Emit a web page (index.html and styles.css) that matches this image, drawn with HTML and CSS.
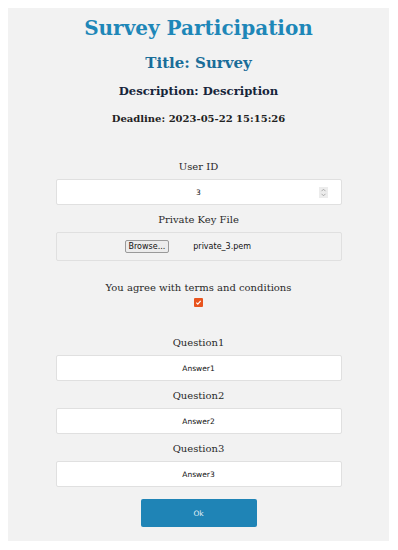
FILE: index.html
```html
<!DOCTYPE html>
<html lang="en">

<head>
    <title>Survey Participation</title>
    <link rel="stylesheet" href="styles.css">
</head>

<body>
    <div class="survey">
        <h1 class="survey-title">Survey Participation</h1>
        <h2 class="survey-name">Title: Survey</h2>
        <h3 class="survey-desc">Description: Description</h3>
        <h4 class="survey-deadline">Deadline: 2023-05-22 15:15:26</h4>

        <form class="survey-form">
            <label class="field-label" for="uid">User ID</label>
            <div class="field number-field">
                <span class="field-value">3</span>
                <span class="spin">
                    <svg width="7" height="9" viewBox="0 0 7 9">
                        <path d="M1.5 3.2 L3.5 1.2 L5.5 3.2 M1.5 5.8 L3.5 7.8 L5.5 5.8" fill="none" stroke="#9a9a9a" stroke-width="0.8"/>
                    </svg>
                </span>
            </div>

            <label class="field-label">Private Key File</label>
            <div class="field file-field">
                <span class="browse">Browse...</span>
                <span class="file-name">private_3.pem</span>
            </div>

            <div class="terms">
                <span class="terms-text">You agree with terms and conditions</span>
                <span class="check">
                    <svg width="7" height="7" viewBox="0 0 7 7">
                        <path d="M1.3 3.6 L2.8 5.1 L5.7 1.8" fill="none" stroke="#fff" stroke-width="1.2"/>
                    </svg>
                </span>
            </div>

            <label class="field-label">Question1</label>
            <div class="field"><span class="field-value">Answer1</span></div>
            <label class="field-label">Question2</label>
            <div class="field"><span class="field-value">Answer2</span></div>
            <label class="field-label">Question3</label>
            <div class="field"><span class="field-value">Answer3</span></div>

            <button type="button" class="ok">Ok</button>
        </form>
    </div>
</body>

</html>
```
FILE: styles.css
```css
body {
    margin: 8px;
    background-color: #ffffff;
    font-family: "DejaVu Serif", serif;
}

.survey {
    background-color: #f2f2f2;
    height: 533px;
    width: 381px;
    box-sizing: border-box;
    padding-top: 7px;
    text-align: center;
}

h1.survey-title {
    margin: 0;
    font-size: 20px;
    line-height: 26px;
    color: #1e87b8;
}

h2.survey-name {
    margin: 12px 0 0 0;
    font-size: 15px;
    line-height: 20px;
    color: #1a6d99;
}

h3.survey-desc {
    margin: 9px 0 0 0;
    font-size: 11.6px;
    line-height: 18px;
    color: #16253a;
}

h4.survey-deadline {
    margin: 11px 0 0 0;
    font-size: 10px;
    line-height: 16px;
    color: #222;
}

.survey-form {
    display: flex;
    flex-direction: column;
    align-items: center;
    margin-top: 32px;
}

.field-label {
    font-size: 10px;
    line-height: 16px;
    color: #2a2a2a;
    margin-bottom: 4px;
}

.field {
    width: 286px;
    height: 26px;
    box-sizing: border-box;
    background-color: #fff;
    border: 1px solid #e0e0e0;
    border-radius: 2px;
    display: flex;
    align-items: center;
    justify-content: center;
    position: relative;
    margin-bottom: 7px;
    font-family: "DejaVu Sans", sans-serif;
    font-size: 7.5px;
    color: #111;
}

.spin {
    position: absolute;
    right: 13px;
    top: 7px;
    width: 9px;
    height: 11px;
    background-color: #ececec;
    display: flex;
    align-items: center;
    justify-content: center;
}

.file-field {
    background-color: #f2f2f2;
    height: 29px;
    gap: 24px;
    justify-content: flex-start;
    padding-left: 68px;
    font-size: 8px;
}

.browse {
    border: 1px solid #9a9a9a;
    border-radius: 2px;
    background-color: #ececec;
    padding: 1px 3px;
    font-size: 8px;
}

.terms {
    display: flex;
    flex-direction: column;
    align-items: center;
    margin-top: 12px;
    margin-bottom: 28px;
}

.terms-text {
    font-size: 10px;
    line-height: 16px;
    color: #2a2a2a;
}

.check {
    width: 9px;
    height: 9px;
    margin-top: 2px;
    background-color: #e8541e;
    border-radius: 1px;
    display: flex;
    align-items: center;
    justify-content: center;
}

.ok {
    margin-top: 5px;
    width: 116px;
    height: 28px;
    border: none;
    border-radius: 2px;
    background-color: #1f84b6;
    color: #e6f1f8;
    font-family: "DejaVu Sans", sans-serif;
    font-size: 7.5px;
}
```
